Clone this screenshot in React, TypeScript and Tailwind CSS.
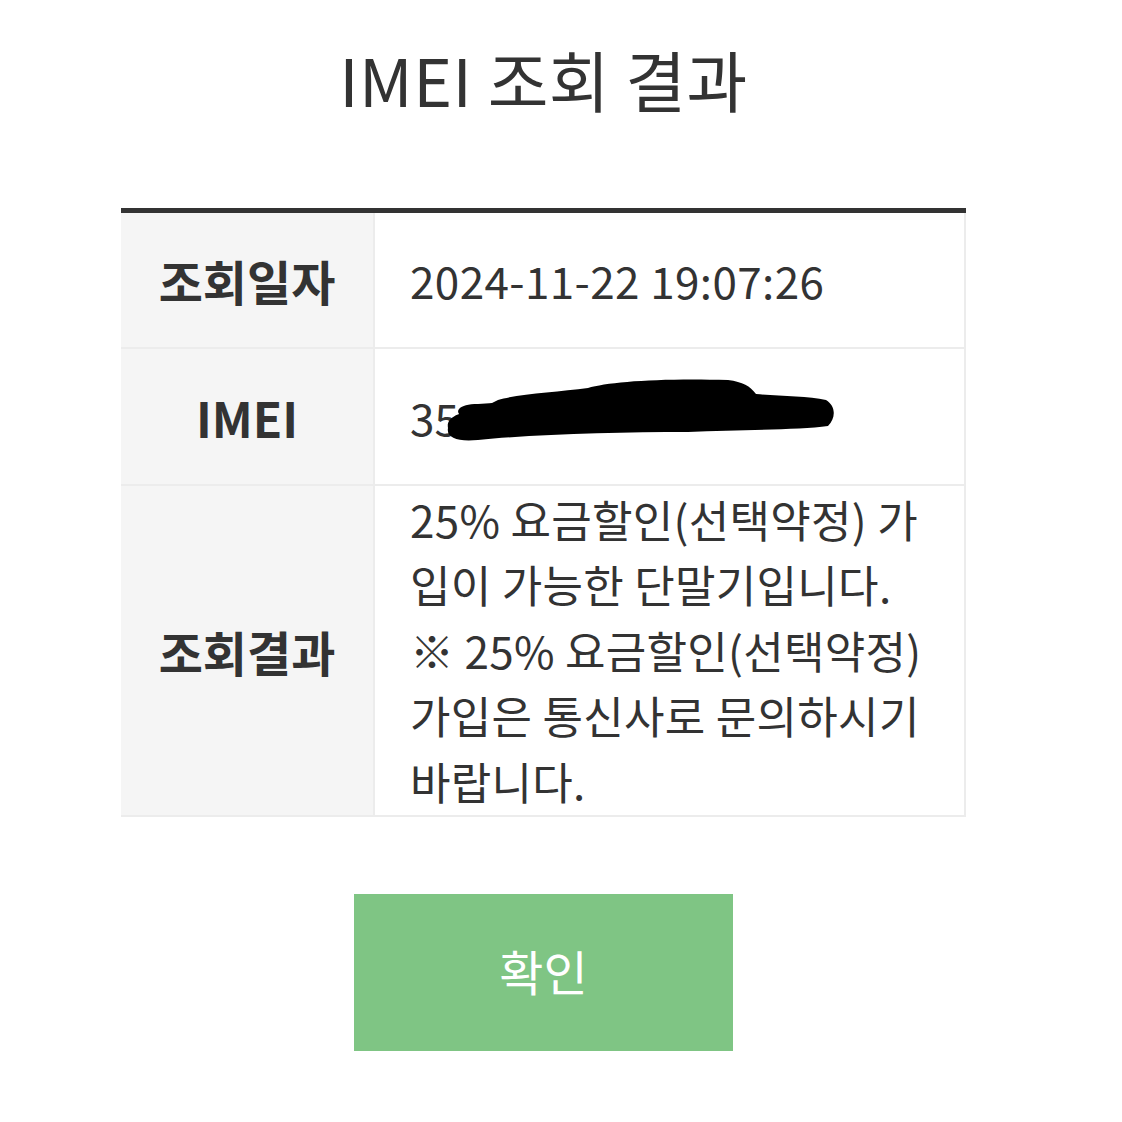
import React from "react";

const font = { fontFamily: '"Noto Sans CJK KR", "Noto Sans", sans-serif' };

function Redaction() {
  return (
    <svg
      className="absolute left-[28px] top-[-14px]"
      width="400"
      height="80"
      viewBox="0 0 400 80"
    >
      <path
        d="M10 58 C 8 48, 20 42, 40 40 L 60 30 C 80 24, 120 22, 150 18 C 170 12, 220 8, 290 10 C 305 12, 312 16, 318 24 C 340 26, 370 26, 388 30 C 398 36, 398 48, 390 56 C 360 60, 300 60, 250 62 C 180 62, 100 64, 40 70 C 20 72, 8 68, 10 58 Z"
        fill="#000"
      />
      <path d="M24 46 C 16 42, 20 34, 40 34 L 70 32 L 60 50 Z" fill="#000" />
    </svg>
  );
}

export default function App() {
  return (
    <div className="w-[1122px] h-[1122px] bg-white text-[#333]" style={font}>
      <div className="w-[1087px]">
        <div className="pt-[42px] flex justify-center">
          <h1 className="text-[66px] leading-[72px] font-normal text-[#333] tracking-[0.5px]">
            IMEI 조회 결과
          </h1>
        </div>
        <div className="mt-[94px] ml-[121px] w-[845px] border-t-[5px] border-[#333]">
          <div className="grid grid-cols-[254px_1fr] border-b-[2px] border-[#ececec]">
            <div className="bg-[#f5f5f5] flex items-center justify-center h-[136px] border-r-[2px] border-[#ececec] border-b-[2px]">
              <span className="text-[48px] font-bold text-[#333]">조회일자</span>
            </div>
            <div className="flex items-center pl-[35px] h-[136px] border-b-[2px] border-[#ececec] border-r-[2px]">
              <span className="text-[44px] text-[#333] tracking-[0.4px]">2024-11-22 19:07:26</span>
            </div>
            <div className="bg-[#f5f5f5] flex items-center justify-center h-[137px] border-r-[2px] border-[#ececec] border-b-[2px]">
              <span className="text-[48px] font-bold text-[#333]">IMEI</span>
            </div>
            <div className="flex items-center pl-[35px] h-[137px] border-b-[2px] border-[#ececec] border-r-[2px]">
              <span className="relative text-[44px] text-[#333]">
                35
                <Redaction />
              </span>
            </div>
            <div className="bg-[#f5f5f5] flex items-center justify-center h-[329px] border-r-[2px] border-[#ececec]">
              <span className="text-[48px] font-bold text-[#333]">조회결과</span>
            </div>
            <div className="flex items-center pl-[35px] pr-[10px] h-[329px] border-r-[2px] border-[#ececec]">
              <p className="text-[44px] leading-[65.5px] text-[#333] tracking-[0.3px] whitespace-nowrap">
                25% 요금할인(선택약정) 가
                <br />
                입이 가능한 단말기입니다.
                <br />
                ※ 25% 요금할인(선택약정)
                <br />
                가입은 통신사로 문의하시기
                <br />
                바랍니다.
              </p>
            </div>
          </div>
        </div>
        <div className="mt-[77px] flex justify-center">
          <button className="w-[379px] h-[157px] bg-[#7fc584] text-white text-[48px] flex items-center justify-center pb-[6px]">
            확인
          </button>
        </div>
      </div>
    </div>
  );
}
